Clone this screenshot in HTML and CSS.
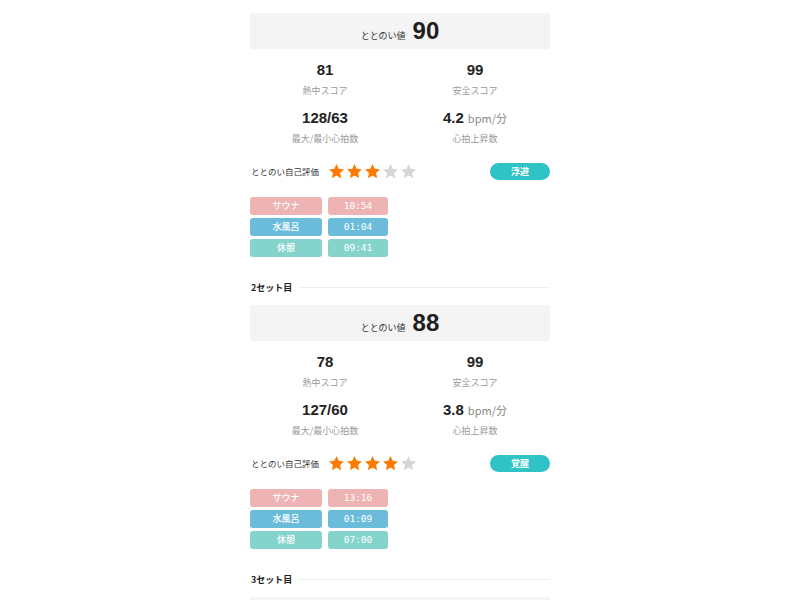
FILE: index.html
```html
<!DOCTYPE html>
<html lang="ja">
<head>
<meta charset="utf-8">
<title>ととのい記録</title>
<link rel="stylesheet" href="styles.css">
</head>
<body>
<main class="page">
  <section class="set">
    <div class="score-box"><span class="score-label">ととのい値</span><span class="score-value">90</span></div>
    <div class="stats">
      <div class="stat"><div class="stat-value">81</div><div class="stat-label">熱中スコア</div></div>
      <div class="stat"><div class="stat-value">99</div><div class="stat-label">安全スコア</div></div>
      <div class="stat"><div class="stat-value">128/63</div><div class="stat-label">最大/最小心拍数</div></div>
      <div class="stat"><div class="stat-value">4.2<span class="unit">bpm/分</span></div><div class="stat-label">心拍上昇数</div></div>
    </div>
    <div class="rating">
      <span class="rating-label">ととのい自己評価</span>
      <span class="stars">
        <svg class="star on" viewBox="0 0 24 24"><polygon points="12,1.5 15.1,8.1 22.5,9 17,14.1 18.5,21.5 12,17.8 5.5,21.5 7,14.1 1.5,9 8.9,8.1"/></svg>
        <svg class="star on" viewBox="0 0 24 24"><polygon points="12,1.5 15.1,8.1 22.5,9 17,14.1 18.5,21.5 12,17.8 5.5,21.5 7,14.1 1.5,9 8.9,8.1"/></svg>
        <svg class="star on" viewBox="0 0 24 24"><polygon points="12,1.5 15.1,8.1 22.5,9 17,14.1 18.5,21.5 12,17.8 5.5,21.5 7,14.1 1.5,9 8.9,8.1"/></svg>
        <svg class="star" viewBox="0 0 24 24"><polygon points="12,1.5 15.1,8.1 22.5,9 17,14.1 18.5,21.5 12,17.8 5.5,21.5 7,14.1 1.5,9 8.9,8.1"/></svg>
        <svg class="star" viewBox="0 0 24 24"><polygon points="12,1.5 15.1,8.1 22.5,9 17,14.1 18.5,21.5 12,17.8 5.5,21.5 7,14.1 1.5,9 8.9,8.1"/></svg>
      </span>
      <span class="badge">浮遊</span>
    </div>
    <div class="times">
      <span class="pill sauna">サウナ</span><span class="pill sauna mono">10:54</span>
      <span class="pill water">水風呂</span><span class="pill water mono">01:04</span>
      <span class="pill rest">休憩</span><span class="pill rest mono">09:41</span>
    </div>
  </section>

  <div class="divider"><span class="divider-label">2セット目</span><span class="divider-line"></span></div>

  <section class="set">
    <div class="score-box"><span class="score-label">ととのい値</span><span class="score-value">88</span></div>
    <div class="stats">
      <div class="stat"><div class="stat-value">78</div><div class="stat-label">熱中スコア</div></div>
      <div class="stat"><div class="stat-value">99</div><div class="stat-label">安全スコア</div></div>
      <div class="stat"><div class="stat-value">127/60</div><div class="stat-label">最大/最小心拍数</div></div>
      <div class="stat"><div class="stat-value">3.8<span class="unit">bpm/分</span></div><div class="stat-label">心拍上昇数</div></div>
    </div>
    <div class="rating">
      <span class="rating-label">ととのい自己評価</span>
      <span class="stars">
        <svg class="star on" viewBox="0 0 24 24"><polygon points="12,1.5 15.1,8.1 22.5,9 17,14.1 18.5,21.5 12,17.8 5.5,21.5 7,14.1 1.5,9 8.9,8.1"/></svg>
        <svg class="star on" viewBox="0 0 24 24"><polygon points="12,1.5 15.1,8.1 22.5,9 17,14.1 18.5,21.5 12,17.8 5.5,21.5 7,14.1 1.5,9 8.9,8.1"/></svg>
        <svg class="star on" viewBox="0 0 24 24"><polygon points="12,1.5 15.1,8.1 22.5,9 17,14.1 18.5,21.5 12,17.8 5.5,21.5 7,14.1 1.5,9 8.9,8.1"/></svg>
        <svg class="star on" viewBox="0 0 24 24"><polygon points="12,1.5 15.1,8.1 22.5,9 17,14.1 18.5,21.5 12,17.8 5.5,21.5 7,14.1 1.5,9 8.9,8.1"/></svg>
        <svg class="star" viewBox="0 0 24 24"><polygon points="12,1.5 15.1,8.1 22.5,9 17,14.1 18.5,21.5 12,17.8 5.5,21.5 7,14.1 1.5,9 8.9,8.1"/></svg>
      </span>
      <span class="badge">覚醒</span>
    </div>
    <div class="times">
      <span class="pill sauna">サウナ</span><span class="pill sauna mono">13:16</span>
      <span class="pill water">水風呂</span><span class="pill water mono">01:09</span>
      <span class="pill rest">休憩</span><span class="pill rest mono">07:00</span>
    </div>
  </section>

  <div class="divider"><span class="divider-label">3セット目</span><span class="divider-line"></span></div>

  <section class="set">
    <div class="score-box"></div>
  </section>
</main>
</body>
</html>
```
FILE: styles.css
```css
html, body {
  margin: 0;
  padding: 0;
  background: #ffffff;
}
body {
  font-family: "Liberation Sans", "Noto Sans CJK JP", sans-serif;
  color: #222222;
}
.page {
  width: 300px;
  margin: 0 auto;
  padding-top: 13px;
}
.score-box {
  height: 36px;
  background: #f4f4f4;
  border-radius: 3px;
  display: flex;
  align-items: baseline;
  justify-content: center;
  gap: 7px;
  line-height: 36px;
}
.score-label {
  font-family: "Noto Sans CJK JP", sans-serif;
  font-size: 9px;
  color: #333333;
}
.score-value {
  font-size: 24px;
  font-weight: 700;
  color: #1e1e1e;
}
.stats {
  display: grid;
  grid-template-columns: 1fr 1fr;
  row-gap: 10px;
  margin-top: 11px;
  text-align: center;
}
.stat-value {
  font-size: 15px;
  font-weight: 700;
  line-height: 20px;
  color: #222222;
}
.unit {
  font-family: "Noto Sans CJK JP", sans-serif;
  font-size: 11px;
  font-weight: 400;
  color: #888888;
  margin-left: 4px;
}
.stat-label {
  margin-top: 4px;
  font-family: "Noto Sans CJK JP", sans-serif;
  font-size: 9px;
  line-height: 14px;
  color: #999999;
}
.rating {
  margin-top: 16px;
  height: 18px;
  display: flex;
  align-items: center;
}
.rating-label {
  font-family: "Noto Sans CJK JP", sans-serif;
  font-size: 8.5px;
  color: #333333;
  margin-left: 1px;
  width: 77px;
}
.stars {
  display: flex;
  gap: 1px;
}
.star {
  width: 17px;
  height: 17px;
  fill: #d6d6d6;
}
.star.on {
  fill: #ff7a00;
}
.badge {
  margin-left: auto;
  width: 60px;
  height: 17px;
  border-radius: 9px;
  background: #2fc3c6;
  color: #ffffff;
  font-family: "Noto Sans CJK JP", sans-serif;
  font-size: 9px;
  font-weight: 700;
  line-height: 17px;
  text-align: center;
}
.times {
  margin-top: 17px;
  display: grid;
  grid-template-columns: 72px 60px;
  column-gap: 6px;
  row-gap: 3px;
}
.pill {
  height: 18px;
  border-radius: 3px;
  color: #ffffff;
  font-family: "Noto Sans CJK JP", sans-serif;
  font-size: 9px;
  font-weight: 500;
  line-height: 18px;
  text-align: center;
}
.pill.mono {
  font-family: "DejaVu Sans Mono", "Liberation Mono", monospace;
  font-size: 9.5px;
  font-weight: 400;
}
.sauna { background: #eeb3b3; }
.water { background: #6bbbdb; }
.rest { background: #84d4cc; }
.divider {
  margin-top: 23px;
  margin-bottom: 11px;
  display: flex;
  align-items: center;
  gap: 6px;
  height: 14px;
}
.divider-label {
  font-family: "Noto Sans CJK JP", sans-serif;
  font-size: 9px;
  font-weight: 700;
  color: #222222;
  margin-left: 1px;
}
.divider-line {
  flex: 1;
  height: 1px;
  background: #eeeeee;
}
```
